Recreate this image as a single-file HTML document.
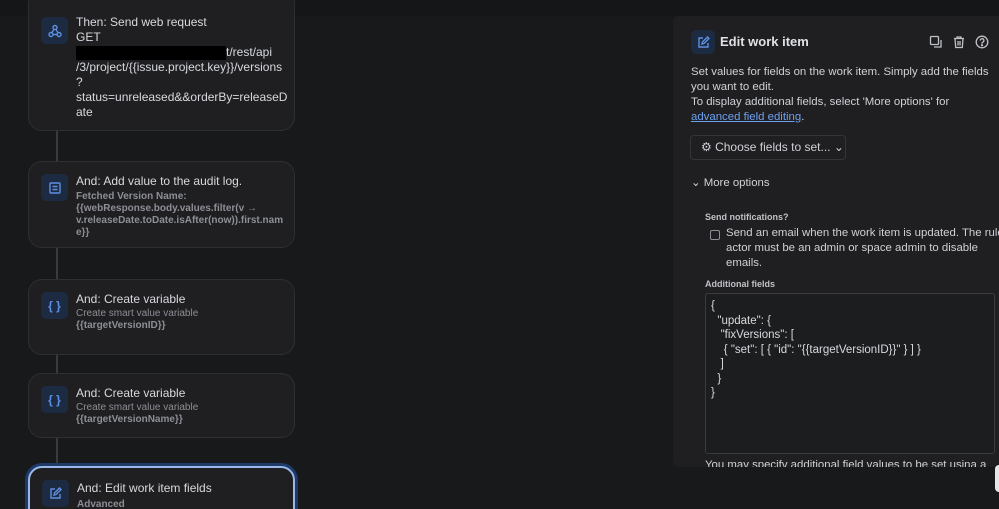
<!DOCTYPE html>
<html><head><style>
*{margin:0;padding:0;box-sizing:border-box}
html,body{width:999px;height:509px;overflow:hidden}
body{background:#18191b;font-family:"Liberation Sans",sans-serif;color:#cfd1d6;position:relative}
.top{position:absolute;left:0;top:0;width:999px;height:16px;background:#151617}
.line{position:absolute;left:56px;width:2px;background:#3a3b3e}
.card{position:absolute;left:28px;width:267px;background:#1f1f21;border:1px solid #2e2f33;border-radius:14px}
.ic{position:absolute;left:12px;width:27px;height:27px;background:#1c2b41;border-radius:5px;color:#5e8fe0;font-size:12px;display:flex;align-items:center;justify-content:center;font-weight:bold}
.t{position:absolute;left:47px;font-size:12px;color:#d7d9de;line-height:15px}
.s{font-size:10px;color:#8c8f96;line-height:12px}
.b{font-size:10px;color:#8c8f96;font-weight:bold;line-height:12px}
.panel{position:absolute;left:673px;top:16px;width:330px;height:451px;background:#1f1f21;border-radius:6px;overflow:hidden}
.p{font-size:11.4px;color:#cfd1d6;line-height:15px}
</style></head><body>
<div class="top"></div>
<div class="line" style="top:131px;height:30px"></div>
<div class="line" style="top:248px;height:31px"></div>
<div class="line" style="top:355px;height:18px"></div>
<div class="line" style="top:438px;height:28px"></div>

<div class="card" style="top:-10px;height:141px">
 <div class="ic" style="top:26px"><svg width="14" height="14" viewBox="0 0 14 14" fill="none" stroke="#5e8fe0" stroke-width="1.4"><circle cx="7" cy="3.5" r="2"/><circle cx="3" cy="10.5" r="2"/><circle cx="11" cy="10.5" r="2"/><path d="M6 5.3L3.8 8.8M5 10.5h4M8 5.3l2 3.5"/></svg></div>
 <div class="t" style="top:24px">Then: Send web request<br>GET<br><span style="display:inline-block;width:150px;height:14px;background:#000;vertical-align:middle"></span>t/rest/api<br>/3/project/{{issue.project.key}}/versions<br>?<br>status=unreleased&amp;&amp;orderBy=releaseD<br>ate</div>
</div>

<div class="card" style="top:161px;height:87px">
 <div class="ic" style="top:12px"><svg width="12" height="12" viewBox="0 0 12 12" fill="none" stroke="#5e8fe0" stroke-width="1.4"><rect x="1" y="1" width="10" height="10" rx="1"/><path d="M3.5 4.5h5M3.5 7.5h5"/></svg></div>
 <div class="t" style="top:12px">And: Add value to the audit log.<div class="b" style="margin-top:2px">Fetched Version Name:<br>{{webResponse.body.values.filter(v →<br>v.releaseDate.toDate.isAfter(now)).first.nam<br>e}}</div></div>
</div>

<div class="card" style="top:279px;height:76px">
 <div class="ic" style="top:12px">{ }</div>
 <div class="t" style="top:12px">And: Create variable<div class="s" style="margin-top:1px">Create smart value variable</div><div class="b">{{targetVersionID}}</div></div>
</div>

<div class="card" style="top:373px;height:65px">
 <div class="ic" style="top:12px">{ }</div>
 <div class="t" style="top:12px">And: Create variable<div class="s" style="margin-top:1px">Create smart value variable</div><div class="b">{{targetVersionName}}</div></div>
</div>

<div class="card" style="top:466px;height:60px;border:2px solid #9bb8ea;box-shadow:0 0 0 3px #1f3a66">
 <div class="ic" style="top:12px"><svg width="13" height="13" viewBox="0 0 13 13" fill="none" stroke="#5e8fe0" stroke-width="1.4"><path d="M6 2H2v9h9V7"/><path d="M5 8l.5-2 5-5 1.5 1.5-5 5z"/></svg></div>
 <div class="t" style="top:13px">And: Edit work item fields<div class="b" style="margin-top:3px">Advanced</div></div>
</div>

<div class="panel">
 <div style="position:absolute;left:18px;top:14px;width:24px;height:24px;background:#1c2b41;border-radius:5px;display:flex;align-items:center;justify-content:center"><svg width="13" height="13" viewBox="0 0 13 13" fill="none" stroke="#5e8fe0" stroke-width="1.4"><path d="M6 2H2v9h9V7"/><path d="M5 8l.5-2 5-5 1.5 1.5-5 5z"/></svg></div>
 <div style="position:absolute;left:47px;top:18px;font-size:13px;font-weight:bold;color:#dfe1e5">Edit work item</div>
 <svg style="position:absolute;left:256px;top:19px" width="14" height="14" viewBox="0 0 14 14" fill="none" stroke="#bfc1c6" stroke-width="1.3"><rect x="1.5" y="1.5" width="8" height="8" rx="1"/><path d="M12 5v7H5"/></svg>
 <svg style="position:absolute;left:279px;top:19px" width="14" height="14" viewBox="0 0 14 14" fill="none" stroke="#bfc1c6" stroke-width="1.3"><path d="M2 3.5h10M5 3.5V2h4v1.5M3 3.5l.7 9h6.6l.7-9M6 6v4.5M8 6v4.5"/></svg>
 <svg style="position:absolute;left:302px;top:19px" width="14" height="14" viewBox="0 0 14 14" fill="none" stroke="#bfc1c6" stroke-width="1.3"><circle cx="7" cy="7" r="5.8"/><path d="M5.3 5.5a1.8 1.8 0 1 1 2.4 1.7c-.5.2-.7.5-.7 1v.5"/><circle cx="7" cy="10.3" r=".5" fill="#bfc1c6"/></svg>
 <div class="p" style="position:absolute;left:18px;top:49px;width:312px">Set values for fields on the work item. Simply add the fields<br>you want to edit.<br>To display additional fields, select 'More options' for<br><span style="color:#6ea0f0;text-decoration:underline">advanced field editing</span>.</div>
 <div style="position:absolute;left:17px;top:119px;width:156px;height:25px;border:1px solid #34353a;border-radius:4px;font-size:12px;line-height:23px;padding-left:10px">⚙ Choose fields to set... ⌄</div>
 <div class="p" style="position:absolute;left:18px;top:160px">⌄ More options</div>
 <div style="position:absolute;left:32px;top:196px;font-size:9px;font-weight:bold;color:#bfc1c6">Send notifications?</div>
 <div style="position:absolute;left:37px;top:214px;width:10px;height:10px;border:1px solid #8c8f96;border-radius:2px"></div>
 <div class="p" style="position:absolute;left:53px;top:210px;width:280px;white-space:nowrap">Send an email when the work item is updated. The rule<br>actor must be an admin or space admin to disable<br>emails.</div>
 <div style="position:absolute;left:32px;top:263px;font-size:9px;font-weight:bold;color:#bfc1c6">Additional fields</div>
 <div style="position:absolute;left:32px;top:277px;width:290px;height:161px;border:1px solid #3a3b40;border-radius:3px;background:#1c1d1f;padding:5px 5px;font-size:11.5px;line-height:14.5px;color:#d7d9de;white-space:pre">{
  "update": {
   "fixVersions": [
    { "set": [ { "id": "{{targetVersionID}}" } ] }
   ]
  }
}</div>
 <div class="p" style="position:absolute;left:32px;top:442px;white-space:nowrap">You mav specifv additional field values to be set usina a</div>
</div>
<div style="position:absolute;left:995px;top:465px;width:10px;height:27px;background:#e5e6e8;border-radius:4px"></div>
</body></html>
